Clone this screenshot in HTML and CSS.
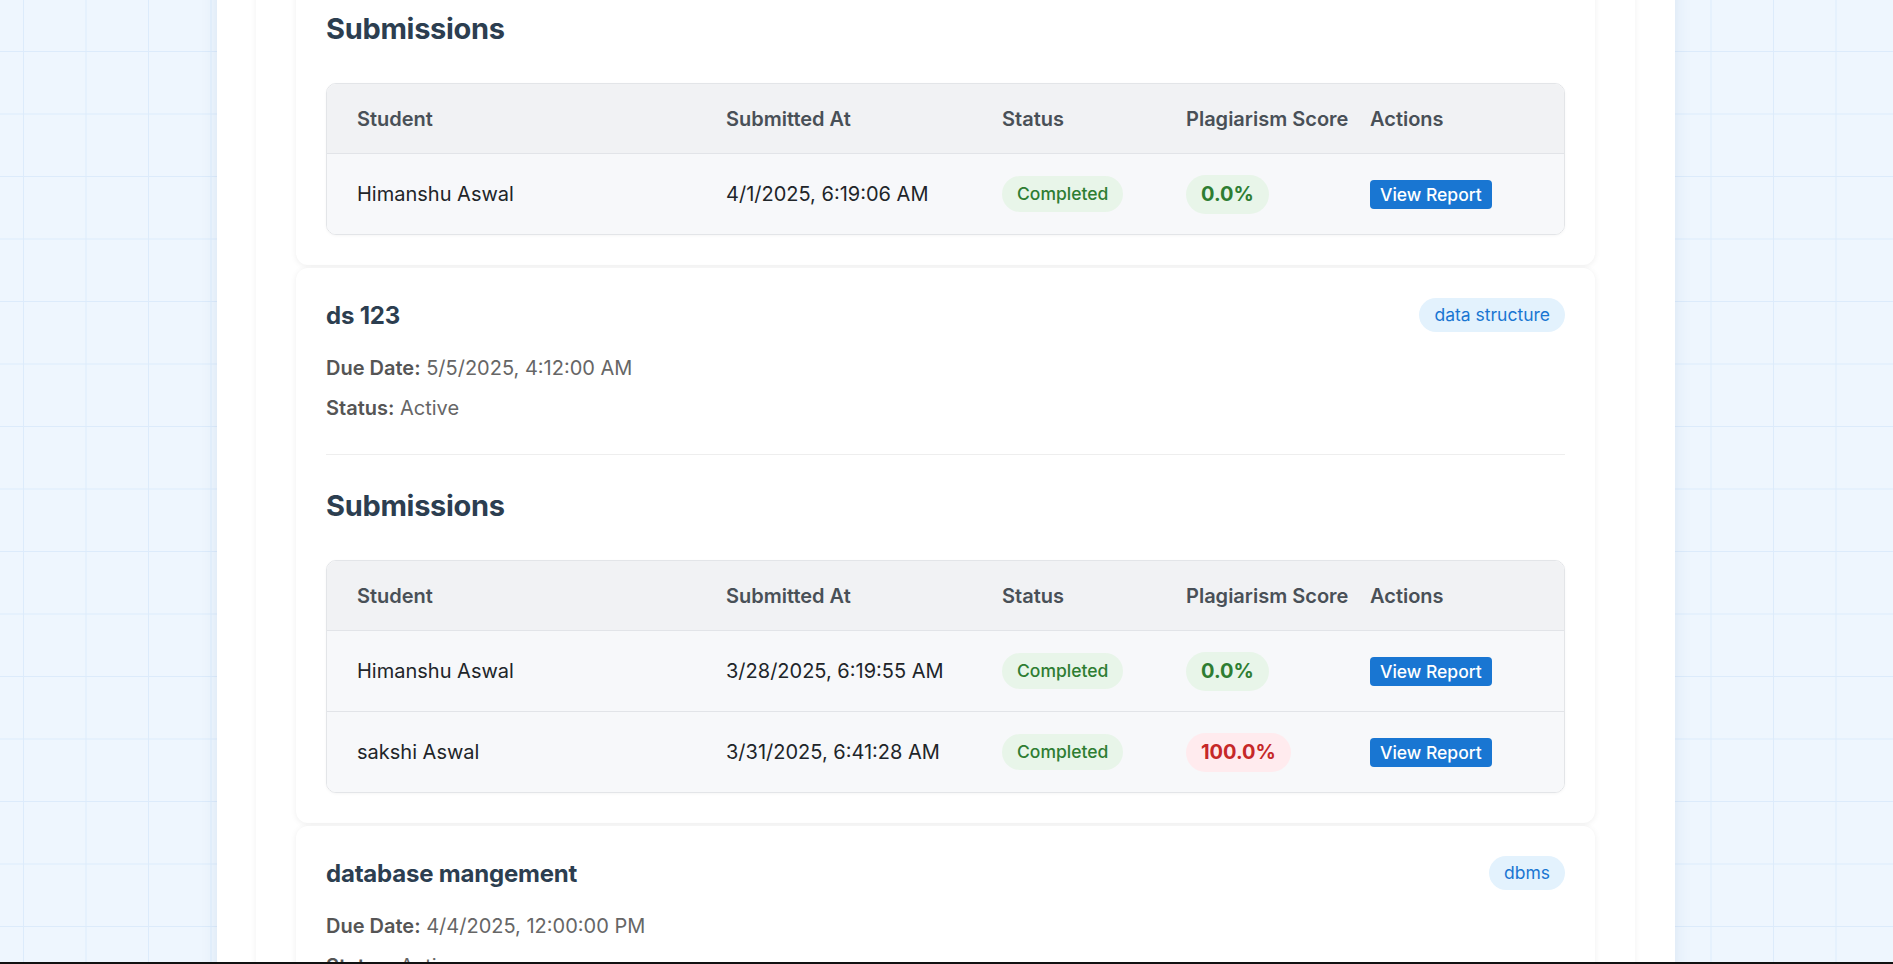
FILE: index.html
```html
<!DOCTYPE html>
<html lang="en">
<head>
<meta charset="utf-8">
<title>Assignments</title>
<link rel="stylesheet" href="styles.css">
</head>
<body>
<div class="panel">
  <div class="inner">

    <div class="card">
      <section class="subs">
        <h3 class="subs-title">Submissions</h3>
        <div class="table-wrap">
          <table class="tbl">
            <colgroup>
              <col class="c1"><col class="c2"><col class="c3"><col class="c4"><col class="c5">
            </colgroup>
            <thead>
              <tr><th>Student</th><th>Submitted At</th><th>Status</th><th>Plagiarism Score</th><th>Actions</th></tr>
            </thead>
            <tbody>
              <tr>
                <td>Himanshu Aswal</td>
                <td>4/1/2025, 6:19:06 AM</td>
                <td><span class="status">Completed</span></td>
                <td><span class="score low">0.0%</span></td>
                <td><button class="btn">View Report</button></td>
              </tr>
            </tbody>
          </table>
        </div>
      </section>
    </div>

    <div class="card">
      <div class="card-head">
        <h2 class="card-title">ds 123</h2>
        <span class="tag">data structure</span>
      </div>
      <div class="meta">
        <p><strong>Due Date:</strong> 5/5/2025, 4:12:00 AM</p>
        <p><strong>Status:</strong> Active</p>
      </div>
      <section class="subs divided">
        <h3 class="subs-title">Submissions</h3>
        <div class="table-wrap">
          <table class="tbl">
            <colgroup>
              <col class="c1"><col class="c2"><col class="c3"><col class="c4"><col class="c5">
            </colgroup>
            <thead>
              <tr><th>Student</th><th>Submitted At</th><th>Status</th><th>Plagiarism Score</th><th>Actions</th></tr>
            </thead>
            <tbody>
              <tr>
                <td>Himanshu Aswal</td>
                <td>3/28/2025, 6:19:55 AM</td>
                <td><span class="status">Completed</span></td>
                <td><span class="score low">0.0%</span></td>
                <td><button class="btn">View Report</button></td>
              </tr>
              <tr>
                <td>sakshi Aswal</td>
                <td>3/31/2025, 6:41:28 AM</td>
                <td><span class="status">Completed</span></td>
                <td><span class="score high">100.0%</span></td>
                <td><button class="btn">View Report</button></td>
              </tr>
            </tbody>
          </table>
        </div>
      </section>
    </div>

    <div class="card">
      <div class="card-head">
        <h2 class="card-title">database mangement</h2>
        <span class="tag">dbms</span>
      </div>
      <div class="meta">
        <p><strong>Due Date:</strong> 4/4/2025, 12:00:00 PM</p>
        <p><strong>Status:</strong> Active</p>
      </div>
    </div>

  </div>
</div>
<div class="bottom-edge"></div>
</body>
</html>
```
FILE: styles.css
```css
html, body {
  margin: 0;
  padding: 0;
  height: 100%;
  overflow: hidden;
}

body {
  font-family: Inter, "Noto Sans", "Liberation Sans", sans-serif;
  background-color: #eef6fe;
  background-image:
    linear-gradient(#dcebfb 1px, transparent 1px),
    linear-gradient(90deg, #dcebfb 1px, transparent 1px);
  background-size: 62.5px 62.5px;
  background-position: 23px 51px;
  color: #212529;
}

.panel {
  width: 1458px;
  margin: -123px 0 0 217px;
  padding: 0 40px 0 39px;
  box-sizing: border-box;
  background: #ffffff;
  box-shadow: 0 0 16px rgba(40, 80, 140, 0.10);
}

.inner {
  background: #ffffff;
  padding: 40px 40px 40px 40px;
  box-shadow: 0 0 7px rgba(0, 0, 0, 0.06);
  display: flex;
  flex-direction: column;
  gap: 3px;
}

.card {
  background: #ffffff;
  border-radius: 12px;
  box-shadow: 0 1px 6px rgba(0, 0, 0, 0.07);
  padding: 30px 30px;
}

.card-head {
  display: flex;
  align-items: center;
  justify-content: space-between;
  height: 34px;
  margin-bottom: 20px;
}

.card-title {
  margin: 0;
  font-size: 24px;
  font-weight: 700;
  color: #2c3e50;
  letter-spacing: -0.2px;
}

.tag {
  background: #e3f2fd;
  color: #1976d2;
  font-size: 17.5px;
  line-height: 22px;
  padding: 6px 15px;
  border-radius: 999px;
}

.meta p {
  margin: 0 0 8px;
  font-size: 20px;
  line-height: 32px;
  color: #666666;
}

.meta p:last-child {
  margin-bottom: 0;
}

.meta strong {
  color: #555555;
  font-weight: 600;
}

.subs {
  margin-top: 30px;
  padding-top: 30px;
  border-top: 1px solid transparent;
}

.subs.divided {
  border-top-color: #eeeeee;
}

.subs-title {
  margin: 0 0 33px;
  font-size: 29px;
  line-height: 42px;
  font-weight: 700;
  color: #2c3e50;
  letter-spacing: -0.3px;
}

.table-wrap {
  border: 1px solid #e3e5e8;
  border-radius: 10px;
  overflow: hidden;
  box-shadow: 0 1px 3px rgba(0, 0, 0, 0.04);
}

.tbl {
  width: 100%;
  border-collapse: separate;
  border-spacing: 0;
  table-layout: fixed;
}

.c1 { width: 369px; }
.c2 { width: 276px; }
.c3 { width: 184px; }
.c4 { width: 184px; }
.c5 { width: 224px; }

.tbl th {
  background: #f1f2f4;
  color: #495057;
  font-size: 20px;
  font-weight: 600;
  text-align: left;
  height: 69px;
  padding: 0 0 0 30px;
  white-space: nowrap;
  border-bottom: 1px solid #e2e4e8;
}

.tbl td {
  background: #f7f8fa;
  font-size: 20px;
  color: #212529;
  height: 80px;
  padding: 0 0 0 30px;
  white-space: nowrap;
  vertical-align: middle;
  border-bottom: 1px solid #e2e4e8;
}

.tbl tbody tr:last-child td {
  border-bottom: none;
}

.status {
  display: inline-block;
  background: #e8f5e9;
  color: #2e7d32;
  font-size: 17.5px;
  font-weight: 500;
  line-height: 26px;
  padding: 5px 15px;
  border-radius: 999px;
}

.score {
  display: inline-block;
  font-size: 20px;
  font-weight: 700;
  line-height: 25px;
  padding: 7px 15px;
  border-radius: 999px;
}

.score.low {
  background: #e8f5e9;
  color: #2e7d32;
}

.score.high {
  background: #ffebee;
  color: #c62828;
}

.btn {
  font-family: inherit;
  background: #1976d2;
  color: #ffffff;
  border: none;
  border-radius: 4px;
  font-size: 17.5px;
  font-weight: 500;
  line-height: 21px;
  padding: 4px 10px;
  cursor: pointer;
}

.bottom-edge {
  position: fixed;
  left: 0;
  right: 0;
  bottom: 0;
  height: 2px;
  background: #111111;
}
```
